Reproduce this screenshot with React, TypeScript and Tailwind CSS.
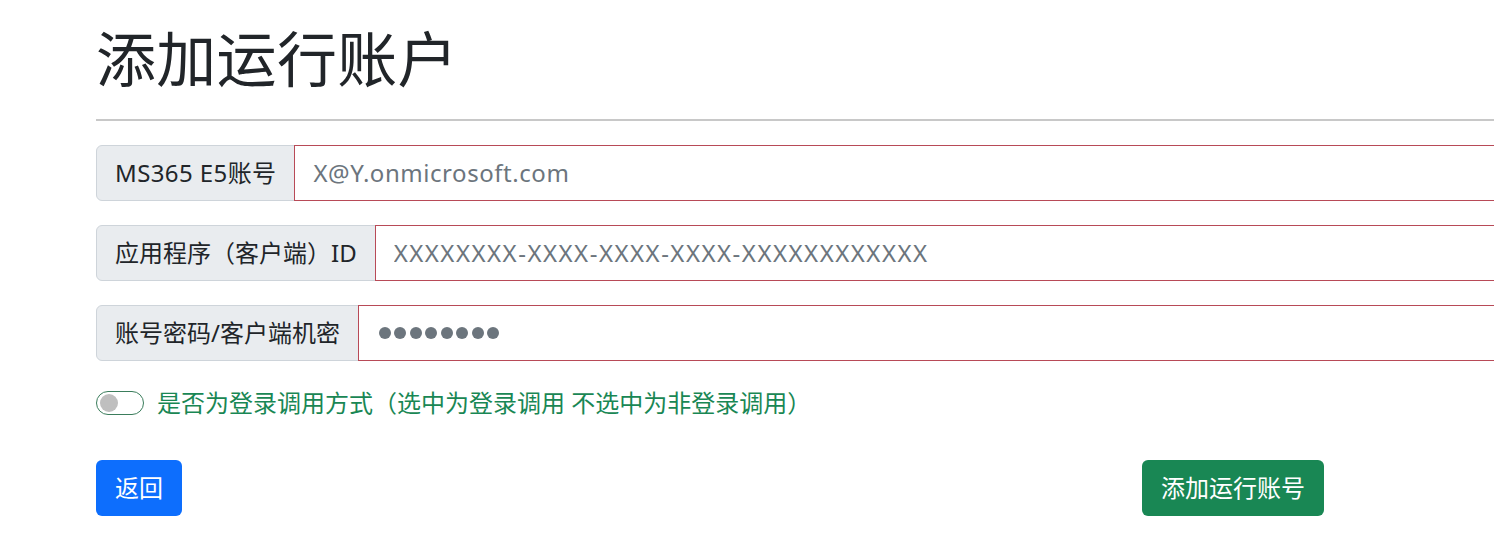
import React from "react";

const font = "font-['Noto_Sans','Noto_Sans_CJK_SC',sans-serif]";

function Field({
  label,
  placeholder,
  dots,
  labelTrack = "",
  track = "",
}: {
  label: string;
  placeholder?: string;
  dots?: boolean;
  labelTrack?: string;
  track?: string;
}) {
  return (
    <div className="flex h-[56px] mb-[24px]">
      <div className={`flex items-center shrink-0 px-[18px] bg-[#e9ecef] border border-[#ced4da] rounded-l-[6px] text-[24px] text-[#212529] whitespace-nowrap ${labelTrack}`}>
        {label}
      </div>
      {dots ? (
        <div className="flex items-center gap-[3.5px] flex-1 px-[20px] border border-[#b84a57] -ml-px bg-white">
          {Array.from({ length: 8 }).map((_, i) => (
            <span key={i} className="w-[12px] h-[12px] rounded-full bg-[#6c757d]" />
          ))}
        </div>
      ) : (
        <input
          className={`flex-1 px-[18px] border border-[#b84a57] -ml-px text-[24px] text-[#212529] placeholder:text-[#6c757d] outline-none bg-white ${track}`}
          placeholder={placeholder}
        />
      )}
    </div>
  );
}

export default function App() {
  return (
    <div className={`w-[1494px] h-[539px] overflow-hidden bg-white ${font}`}>
      <div className="w-[1800px] pl-[96px] pt-[23px]">
        <h1 className="text-[60px] leading-[72px] font-normal text-[#212529] mb-[24px] tracking-[0.3px]">添加运行账户</h1>
        <hr className="border-0 h-[2px] bg-[#c8c8c8] mb-[24px]" />
        <Field label="MS365 E5账号" placeholder="X@Y.onmicrosoft.com" labelTrack="tracking-[0.4px]" track="tracking-[0.55px]" />
        <Field label="应用程序（客户端）ID" placeholder="XXXXXXXX-XXXX-XXXX-XXXX-XXXXXXXXXXXX" track="tracking-[1.5px]" />
        <Field label="账号密码/客户端机密" dots />
        <label className="flex items-center gap-[13px] mt-[7px] h-[36px]">
          <span className="relative w-[48px] h-[24px] rounded-full border-[1.5px] border-[#3b7d5c] bg-white">
            <span className="absolute left-[3px] top-[2px] w-[18px] h-[18px] rounded-full bg-[#bfbfbf]" />
          </span>
          <span className="text-[24px] text-[#198754]">是否为登录调用方式（选中为登录调用 不选中为非登录调用）</span>
        </label>
        <div className="flex mt-[39px]">
          <button className="h-[56px] px-[19px] rounded-[6px] bg-[#0d6efd] text-white text-[24px]">返回</button>
          <button className="h-[56px] px-[19px] ml-[960px] rounded-[6px] bg-[#198754] text-white text-[24px]">添加运行账号</button>
        </div>
      </div>
    </div>
  );
}
